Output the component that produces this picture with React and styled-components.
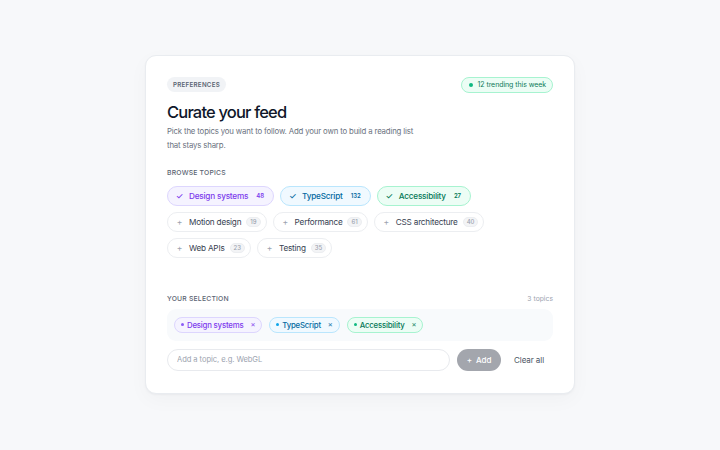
import React, { useState } from "react";
import styled, { createGlobalStyle, css } from "styled-components";

const GlobalStyle = createGlobalStyle`
  * { box-sizing: border-box; }
  body {
    margin: 0;
    background: #f7f8fa;
    font-family: Inter, "Noto Sans", sans-serif;
    color: #111827;
  }
`;

const tones = {
  violet: { bg: "#f5f3ff", border: "#ddd6fe", text: "#7c3aed", dot: "#8b5cf6" },
  sky: { bg: "#f0f9ff", border: "#bae6fd", text: "#0369a1", dot: "#0ea5e9" },
  green: { bg: "#ecfdf5", border: "#a7f3d0", text: "#047857", dot: "#10b981" },
};

const Page = styled.div`
  min-height: 100vh;
  display: flex;
  align-items: center;
  justify-content: center;
  padding-bottom: 2px;
`;

const Card = styled.div`
  width: 430px;
  background: #fff;
  border: 1px solid #e9ecf0;
  border-radius: 11px;
  box-shadow: 0 1px 2px rgba(15, 23, 42, 0.04), 0 6px 20px rgba(15, 23, 42, 0.03);
  padding: 21px 21px 22px;
  display: flex;
  flex-direction: column;
`;

const HeaderRow = styled.div`
  display: flex;
  justify-content: space-between;
  align-items: center;
  height: 16px;
`;

const Eyebrow = styled.span`
  background: #f1f3f6;
  color: #5b6472;
  font-size: 6.2px;
  font-weight: 600;
  letter-spacing: 0.045em;
  text-transform: uppercase;
  padding: 0 6px;
  height: 15px;
  line-height: 15px;
  border-radius: 999px;
`;

const Trending = styled.span`
  display: inline-flex;
  align-items: center;
  gap: 5px;
  height: 16px;
  padding: 0 6px 0 7px;
  border-radius: 999px;
  background: #ecfdf5;
  border: 1px solid #a7f3d0;
  color: #0f7a5a;
  font-size: 7px;
  font-weight: 400;
  letter-spacing: -0.01em;
`;

const Dot = styled.span`
  width: ${(p) => p.size || 4}px;
  height: ${(p) => p.size || 4}px;
  border-radius: 50%;
  background: ${(p) => p.color};
  flex: none;
`;

const Title = styled.h1`
  margin: 8px 0 0;
  font-size: 16.5px;
  line-height: 22px;
  font-weight: 500;
  letter-spacing: -0.05em;
  color: #0f172a;
`;

const Lead = styled.p`
  margin: 1px 0 0;
  width: 256px;
  font-size: 7.8px;
  line-height: 14px;
  letter-spacing: -0.02em;
  color: #6b7280;
`;

const SectionLabel = styled.div`
  display: flex;
  justify-content: space-between;
  align-items: center;
  margin-top: ${(p) => p.top}px;
  height: 12px;
  font-size: 6.8px;
  font-weight: 500;
  letter-spacing: 0.03em;
  text-transform: uppercase;
  color: #5b6472;

  small {
    font-size: 6.8px;
    text-transform: none;
    letter-spacing: 0;
    font-weight: 400;
    color: #9ca3af;
  }
`;

const ChipGrid = styled.div`
  display: flex;
  flex-wrap: wrap;
  gap: 6px 6px;
  margin-top: 7px;
`;

const Chip = styled.button`
  display: inline-flex;
  align-items: center;
  height: 20px;
  padding: 0 5px 0 8px;
  border-radius: 999px;
  font-family: inherit;
  font-size: 8.2px;
  letter-spacing: -0.025em;
  font-weight: 500;
  cursor: pointer;
  gap: 5px;
  ${(p) =>
    p.tone
      ? css`
          background: ${tones[p.tone].bg};
          border: 1px solid ${tones[p.tone].border};
          color: ${tones[p.tone].text};
        `
      : css`
          background: #fff;
          border: 1px solid #eceef1;
          color: #374151;
          font-weight: 400;
        `}
`;

const Mark = styled.span`
  width: 7px;
  margin-right: 1px;
  display: inline-flex;
  justify-content: center;
  font-size: 8.5px;
  color: ${(p) => (p.tone ? tones[p.tone].text : "#9ca3af")};
`;

const Count = styled.span`
  font-size: 6px;
  font-weight: 600;
  letter-spacing: 0;
  padding: 0 3px;
  height: 10px;
  line-height: 10px;
  border-radius: 999px;
  ${(p) =>
    p.tone
      ? css`
          margin-right: 1px;
          color: ${tones[p.tone].text};
        `
      : css`
          background: #f3f4f6;
          border: 1px solid #eceef1;
          line-height: 8px;
          color: #9ca3af;
          font-weight: 500;
        `}
`;

const Tray = styled.div`
  margin-top: 4px;
  height: 32px;
  background: #f8fafc;
  border-radius: 9px;
  display: flex;
  align-items: center;
  gap: 7px;
  padding: 0 7px;
`;

const Tag = styled.span`
  display: inline-flex;
  align-items: center;
  gap: 3px;
  height: 16px;
  padding: 0 6px;
  border-radius: 999px;
  background: ${(p) => tones[p.tone].bg};
  border: 1px solid ${(p) => tones[p.tone].border};
  color: ${(p) => tones[p.tone].text};
  font-size: 7.8px;
  letter-spacing: -0.025em;
  font-weight: 500;
`;

const Remove = styled.span`
  margin-left: 4px;
  font-size: 7.5px;
  opacity: 0.8;
`;

const AddRow = styled.div`
  display: flex;
  align-items: center;
  margin-top: 8px;
  gap: 7px;
`;

const Input = styled.input`
  flex: 1;
  height: 22px;
  border: 1px solid #e8eaee;
  border-radius: 999px;
  padding: 0 9px;
  font-family: inherit;
  font-size: 7.6px;
  letter-spacing: -0.01em;
  color: #111827;
  outline: none;

  &::placeholder {
    color: #9ca3af;
  }
`;

const AddButton = styled.button`
  height: 22px;
  width: 44px;
  border: none;
  border-radius: 999px;
  background: #a3a6ad;
  color: #fff;
  font-family: inherit;
  font-size: 8px;
  font-weight: 500;
  display: inline-flex;
  align-items: center;
  justify-content: center;
  gap: 4px;
`;

const ClearButton = styled.button`
  border: none;
  background: none;
  padding: 0 9px 0 6px;
  font-family: inherit;
  font-size: 8px;
  letter-spacing: -0.01em;
  color: #4b5563;
`;

const topics = [
  { name: "Design systems", count: 48, tone: "violet" },
  { name: "TypeScript", count: 132, tone: "sky" },
  { name: "Accessibility", count: 27, tone: "green" },
  { name: "Motion design", count: 19 },
  { name: "Performance", count: 61 },
  { name: "CSS architecture", count: 40 },
  { name: "Web APIs", count: 23 },
  { name: "Testing", count: 35 },
];

const App = () => {
  const [draft, setDraft] = useState("");
  const picked = topics.filter((t) => t.tone);

  return (
    <>
      <GlobalStyle />
      <Page>
        <Card>
          <HeaderRow>
            <Eyebrow>Preferences</Eyebrow>
            <Trending>
              <Dot color="#10b981" />
              12 trending this week
            </Trending>
          </HeaderRow>
          <Title>Curate your feed</Title>
          <Lead>
            Pick the topics you want to follow. Add your own to build a reading list
            that stays sharp.
          </Lead>

          <SectionLabel top={15}>Browse topics</SectionLabel>
          <ChipGrid>
            {topics.map((t) => (
              <Chip key={t.name} tone={t.tone}>
                <Mark tone={t.tone}>{t.tone ? "✓" : "+"}</Mark>
                {t.name}
                <Count tone={t.tone}>{t.count}</Count>
              </Chip>
            ))}
          </ChipGrid>

          <SectionLabel top={35}>
            Your selection
            <small>{picked.length} topics</small>
          </SectionLabel>
          <Tray>
            {picked.map((t) => (
              <Tag key={t.name} tone={t.tone}>
                <Dot size={3} color={tones[t.tone].dot} />
                {t.name}
                <Remove>×</Remove>
              </Tag>
            ))}
          </Tray>

          <AddRow>
            <Input
              value={draft}
              onChange={(e) => setDraft(e.target.value)}
              placeholder="Add a topic, e.g. WebGL"
            />
            <AddButton>
              <span>+</span>Add
            </AddButton>
            <ClearButton>Clear all</ClearButton>
          </AddRow>
        </Card>
      </Page>
    </>
  );
};

export default App;
